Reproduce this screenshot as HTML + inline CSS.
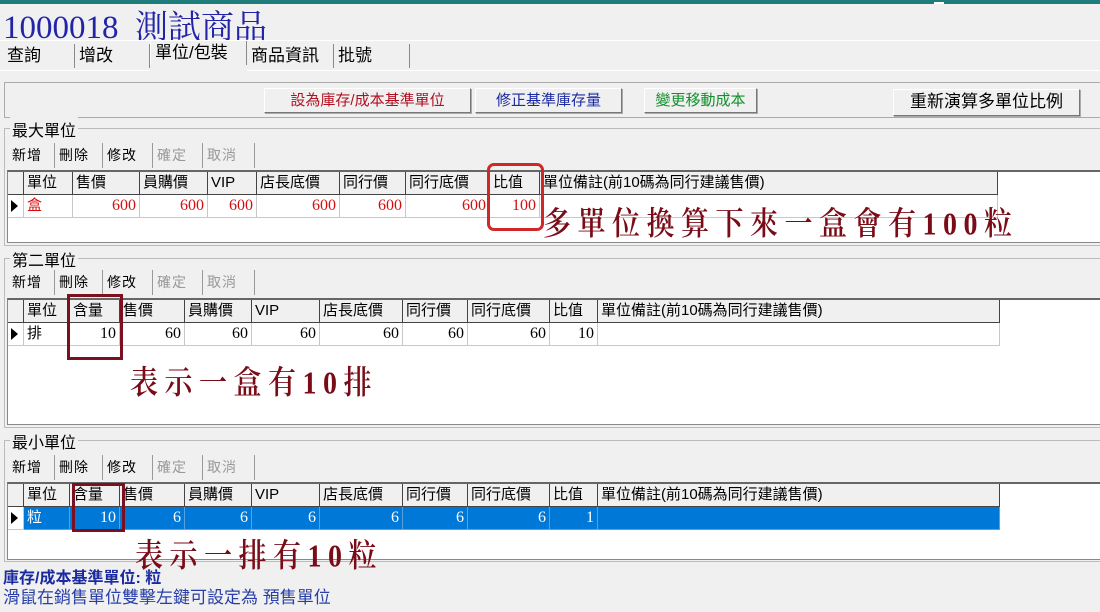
<!DOCTYPE html>
<html><head><meta charset="utf-8">
<style>
*{box-sizing:border-box;margin:0;padding:0}
body{width:1100px;height:612px;background:#f0f0f0;position:relative;overflow:hidden;font-family:"Liberation Sans","Noto Sans CJK TC",sans-serif;font-size:15px;color:#000}
.a{position:absolute}
.topbar{left:0;top:0;width:1100px;height:4px;background:#1e7d7a}
.title{left:3px;top:1px;font-family:"Liberation Serif","Noto Serif CJK SC",serif;font-size:33px;color:#2323a8;white-space:nowrap;letter-spacing:0}
.tab{top:44px;height:24px;line-height:24px;font-size:17px;border-right:1px solid #888;padding-left:4px}
.btn{height:25px;line-height:23px;text-align:center;font-size:15px;background:#f0f0f0;border:1px solid;border-color:#fff #777 #777 #fff;box-shadow:1px 1px 0 #aaa}
.grp{border:1px solid #bbb;border-right:none}
.glab{font-size:16px;background:#f0f0f0;padding:0 2px}
.sb{top:0;height:25px;line-height:25px;font-size:14px;border-right:1px solid #999;padding:0 4px;letter-spacing:1px}
.grid{background:#fff;border:1px solid #888;border-top:2px solid #666;border-right:none}
.row{display:flex;height:23px;line-height:22px;white-space:nowrap}
.row div{border-right:1px solid #c8c8c8;border-bottom:1px solid #c8c8c8;overflow:hidden;padding:0 3px}
.hd div{background:#f0f0f0;border-right:1px solid #444;border-bottom:1px solid #444;font-size:15px}
.num{text-align:right;font-family:"Liberation Serif",serif;font-size:16px}
.ind{padding:0!important;position:relative}
.ind::after{content:"";position:absolute;left:3px;top:5px;border-left:7px solid #000;border-top:6px solid transparent;border-bottom:6px solid transparent}
.ann{font-family:"Liberation Serif","Noto Serif CJK SC",serif;font-size:28px;color:#7a0c18;font-weight:600;white-space:nowrap;letter-spacing:6.5px;transform:scaleY(1.15);transform-origin:0 0}
.box{border:3px solid #7a1020}
</style></head><body>
<div class="a topbar"></div>
<div class="a" style="left:934px;top:2px;width:10px;height:2px;background:#fff"></div>
<div class="a title">1000018&nbsp; 測試商品</div>
<div class="a" style="left:0;top:40px;width:1100px;height:1px;background:#fff"></div>
<div class="a tab" style="left:3px;width:72px">查詢</div>
<div class="a tab" style="left:75px;width:75px">增改</div>
<div class="a tab" style="left:150px;top:41px;width:97px;border-left:1px solid #fff">單位/包裝</div>
<div class="a tab" style="left:247px;width:87px">商品資訊</div>
<div class="a tab" style="left:334px;width:76px">批號</div>
<div class="a" style="left:0;top:70px;width:150px;height:1px;background:#fff"></div>
<div class="a" style="left:247px;top:70px;width:853px;height:1px;background:#fff"></div>

<div class="a" style="left:4px;top:82px;width:1096px;height:36px;border:1px solid #aaa;border-right:none"></div>
<div class="a btn" style="left:264px;top:88px;width:207px;color:#b01020">設為庫存/成本基準單位</div>
<div class="a btn" style="left:475px;top:88px;width:147px;color:#1a2aa0">修正基準庫存量</div>
<div class="a btn" style="left:644px;top:88px;width:113px;color:#10902a">變更移動成本</div>
<div class="a btn" style="left:893px;top:89px;width:187px;height:27px;font-size:17px">重新演算多單位比例</div>

<!-- group 1 -->
<div class="a grp" style="left:4px;top:128px;width:1096px;height:118px"></div>
<div class="a glab" style="left:10px;top:117px">最大單位</div>
<div class="a" style="left:8px;top:143px;height:25px">
<div class="a sb" style="left:0;width:47px">新增</div><div class="a sb" style="left:47px;width:48px">刪除</div><div class="a sb" style="left:95px;width:50px">修改</div><div class="a sb" style="left:145px;width:50px;color:#999">確定</div><div class="a sb" style="left:195px;width:52px;color:#999">取消</div></div>
<div class="a grid" style="left:7px;top:170px;width:1093px;height:73px">
<div class="row hd"><div style="width:16px"></div><div style="width:49px">單位</div><div style="width:67px">售價</div><div style="width:68px">員購價</div><div style="width:49px">VIP</div><div style="width:83px">店長底價</div><div style="width:66px">同行價</div><div style="width:84px">同行底價</div><div style="width:50px">比值</div><div style="width:458px">單位備註(前10碼為同行建議售價)</div></div>
<div class="row" style="color:#d01010"><div class="ind" style="width:16px"></div><div style="width:49px">盒</div><div class="num" style="width:67px">600</div><div class="num" style="width:68px">600</div><div class="num" style="width:49px">600</div><div class="num" style="width:83px">600</div><div class="num" style="width:66px">600</div><div class="num" style="width:84px">600</div><div class="num" style="width:50px">100</div><div style="width:458px"></div></div>
</div>
<div class="a" style="left:487px;top:163px;width:57px;height:68px;border:3px solid #d02828;border-radius:7px"></div>
<div class="a ann" style="left:543px;top:199px">多單位換算下來一盒會有100粒</div>

<!-- group 2 -->
<div class="a grp" style="left:4px;top:258px;width:1096px;height:170px"></div>
<div class="a glab" style="left:10px;top:247px">第二單位</div>
<div class="a" style="left:8px;top:270px;height:25px">
<div class="a sb" style="left:0;width:47px">新增</div><div class="a sb" style="left:47px;width:48px">刪除</div><div class="a sb" style="left:95px;width:50px">修改</div><div class="a sb" style="left:145px;width:50px;color:#999">確定</div><div class="a sb" style="left:195px;width:52px;color:#999">取消</div></div>
<div class="a grid" style="left:7px;top:298px;width:1093px;height:127px">
<div class="row hd"><div style="width:16px"></div><div style="width:46px">單位</div><div style="width:50px">含量</div><div style="width:65px">售價</div><div style="width:67px">員購價</div><div style="width:68px">VIP</div><div style="width:83px">店長底價</div><div style="width:65px">同行價</div><div style="width:82px">同行底價</div><div style="width:48px">比值</div><div style="width:402px">單位備註(前10碼為同行建議售價)</div></div>
<div class="row"><div class="ind" style="width:16px"></div><div style="width:46px">排</div><div class="num" style="width:50px">10</div><div class="num" style="width:65px">60</div><div class="num" style="width:67px">60</div><div class="num" style="width:68px">60</div><div class="num" style="width:83px">60</div><div class="num" style="width:65px">60</div><div class="num" style="width:82px">60</div><div class="num" style="width:48px">10</div><div style="width:402px"></div></div>
</div>
<div class="a box" style="left:67px;top:294px;width:56px;height:66px"></div>
<div class="a ann" style="left:130px;top:358px">表示一盒有10排</div>

<!-- group 3 -->
<div class="a grp" style="left:4px;top:440px;width:1096px;height:122px"></div>
<div class="a glab" style="left:10px;top:429px">最小單位</div>
<div class="a" style="left:8px;top:455px;height:25px">
<div class="a sb" style="left:0;width:47px">新增</div><div class="a sb" style="left:47px;width:48px">刪除</div><div class="a sb" style="left:95px;width:50px">修改</div><div class="a sb" style="left:145px;width:50px;color:#999">確定</div><div class="a sb" style="left:195px;width:52px;color:#999">取消</div></div>
<div class="a grid" style="left:7px;top:482px;width:1093px;height:78px">
<div class="row hd"><div style="width:16px"></div><div style="width:46px">單位</div><div style="width:50px">含量</div><div style="width:65px">售價</div><div style="width:67px">員購價</div><div style="width:68px">VIP</div><div style="width:83px">店長底價</div><div style="width:65px">同行價</div><div style="width:82px">同行底價</div><div style="width:48px">比值</div><div style="width:402px">單位備註(前10碼為同行建議售價)</div></div>
<div class="row" style="color:#fff"><div class="ind" style="width:16px;background:#fff"></div><div style="width:46px;background:#0078d7;border-color:#5aa0e0">粒</div><div class="num" style="width:50px;background:#0078d7;border-color:#5aa0e0">10</div><div class="num" style="width:65px;background:#0078d7;border-color:#5aa0e0">6</div><div class="num" style="width:67px;background:#0078d7;border-color:#5aa0e0">6</div><div class="num" style="width:68px;background:#0078d7;border-color:#5aa0e0">6</div><div class="num" style="width:83px;background:#0078d7;border-color:#5aa0e0">6</div><div class="num" style="width:65px;background:#0078d7;border-color:#5aa0e0">6</div><div class="num" style="width:82px;background:#0078d7;border-color:#5aa0e0">6</div><div class="num" style="width:48px;background:#0078d7;border-color:#5aa0e0">1</div><div style="width:402px;background:#0078d7;border-color:#5aa0e0"></div></div>
</div>
<div class="a box" style="left:72px;top:483px;width:53px;height:49px"></div>
<div class="a ann" style="left:135px;top:531px">表示一排有10粒</div>

<div class="a" style="left:3px;top:564px;font-size:16px;font-weight:bold;color:#1a2aa0">庫存/成本基準單位: 粒</div>
<div class="a" style="left:3px;top:583px;font-size:17px;color:#2a40a8">滑鼠在銷售單位雙擊左鍵可設定為 預售單位</div>
</body></html>
